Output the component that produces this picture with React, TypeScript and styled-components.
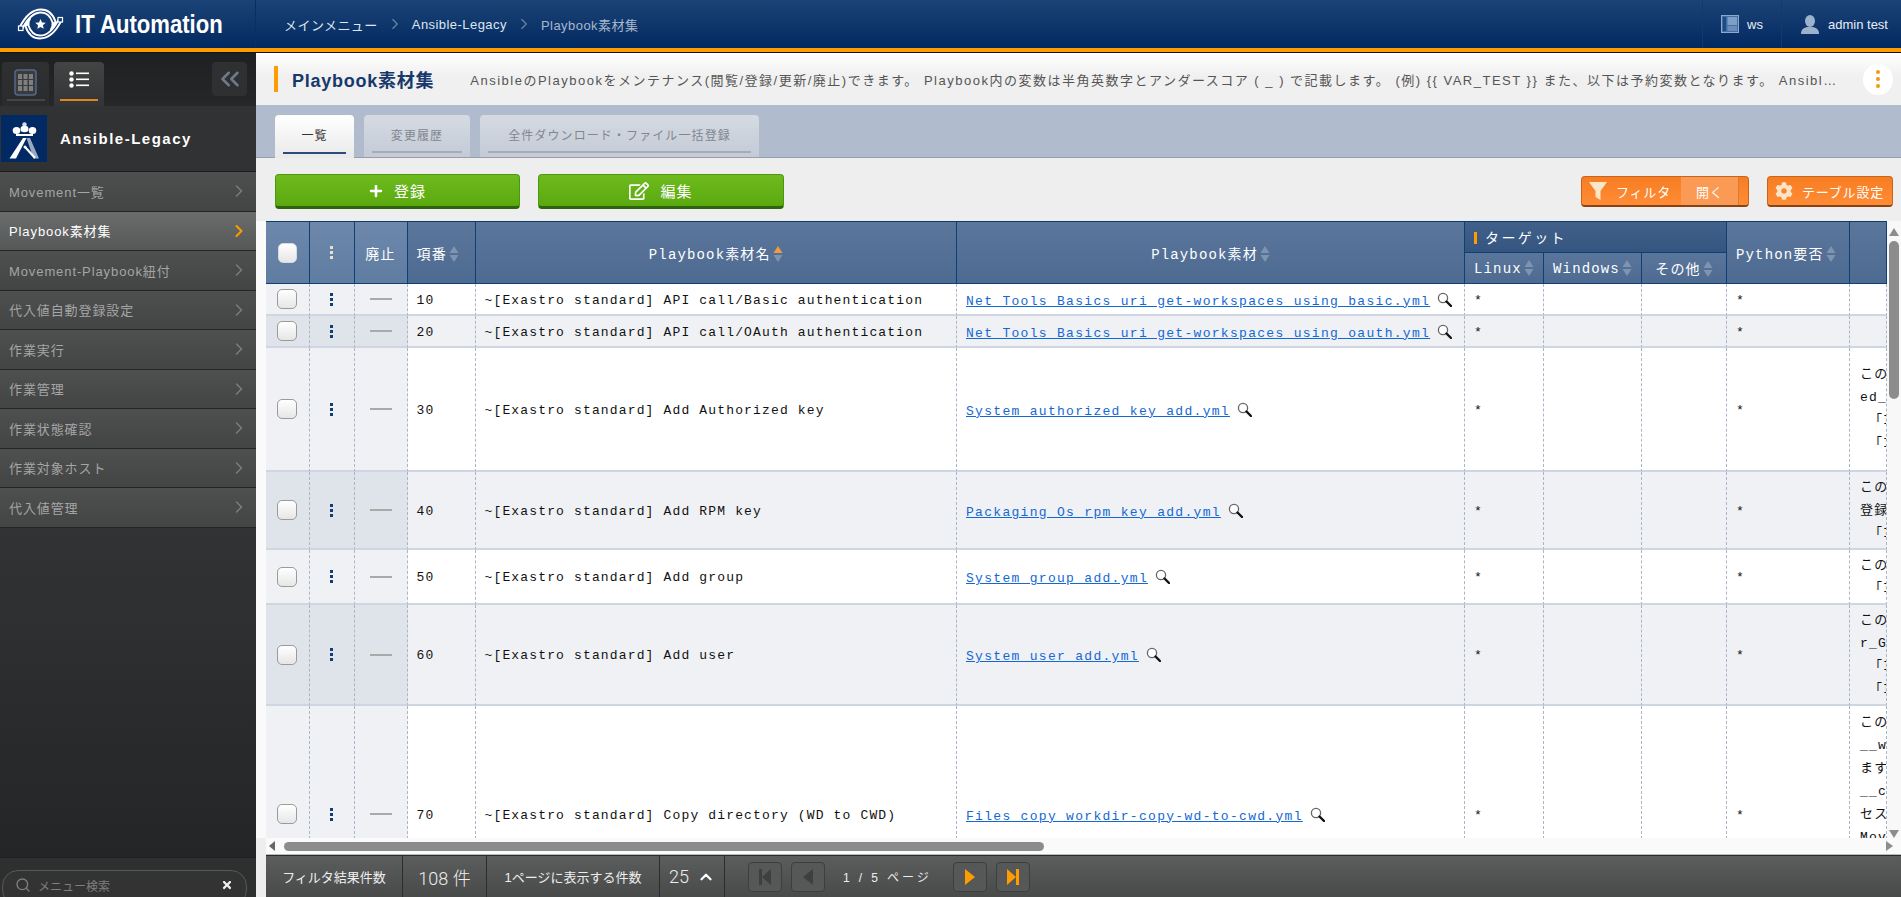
import React from 'react';
import styled, { createGlobalStyle } from 'styled-components';
import { FaCog, FaPlus, FaRegEdit, FaTimes } from 'react-icons/fa';
import { ChevronRight, ChevronUp, ChevronsLeft, Search } from 'lucide-react';

const GlobalStyle = createGlobalStyle`
  html, body { margin: 0; padding: 0; height: 100%; overflow: hidden; }
  body { font-family: "Liberation Sans", "Noto Sans CJK JP", sans-serif; font-size: 13px; background: #eee; }
  * { box-sizing: border-box; }
`;

const Page = styled.div`
  display: flex;
  flex-direction: column;
  width: 1901px;
  height: 897px;
  overflow: hidden;
`;

/* ---------- header ---------- */

const Header = styled.header`
  display: flex;
  align-items: stretch;
  height: 52px;
  flex: none;
  background: linear-gradient(#1b4376, #022a62);
  border-bottom: 4px solid #ff9d00;
  color: #fff;
`;

const Brand = styled.div`
  display: flex;
  align-items: center;
  width: 256px;
  padding-left: 17px;
  gap: 11px;
  border-right: 1px solid #0c2f60;
`;

const BrandName = styled.span`
  display: inline-block;
  font-weight: 700;
  font-size: 26px;
  white-space: nowrap;
  transform: scaleX(0.85);
  transform-origin: left center;
`;

const Crumbs = styled.nav`
  display: flex;
  align-items: center;
  flex: 1;
  padding-left: 28px;
  font-size: 13px;
  letter-spacing: 0.45px;
`;

const Crumb = styled.span<{ $current?: boolean }>`
  color: ${({ $current }) => ($current ? '#a9b7cb' : '#dfe6ef')};
  white-space: nowrap;
`;

const CrumbArrow = styled(ChevronRight)`
  color: #6f87a8;
  margin: 0 8px;
`;

const HeaderCell = styled.div<{ $width: number }>`
  display: flex;
  align-items: center;
  gap: 8px;
  width: ${({ $width }) => $width}px;
  padding-left: 18px;
  border-left: 1px solid #143a6b;
  font-size: 13px;
  color: #e8eef6;
  white-space: nowrap;
`;

/* ---------- body ---------- */

const Body = styled.div`
  display: flex;
  flex: 1;
  min-height: 0;
  border-top: 1px solid #111;
`;

const Sidebar = styled.aside`
  display: flex;
  flex-direction: column;
  width: 256px;
  flex: none;
  background: #2a2b2c;
`;

const SideTabs = styled.div`
  display: flex;
  height: 53px;
  padding: 9px 9px 0 2px;
  gap: 5px;
  background: linear-gradient(#1f2021, #262728);
`;

const SideTab = styled.div<{ $active?: boolean }>`
  display: flex;
  flex-direction: column;
  align-items: center;
  width: ${({ $active }) => ($active ? 50 : 47)}px;
  padding-top: ${({ $active }) => ($active ? 9 : 7)}px;
  border-radius: 4px 4px 0 0;
  background: ${({ $active }) => ($active ? 'linear-gradient(#434444, #333435)' : 'linear-gradient(#2f3031, #2a2b2c)')};
`;

const SideTabLine = styled.span<{ $active?: boolean }>`
  display: block;
  width: 38px;
  height: 2px;
  margin-top: auto;
  margin-bottom: 5px;
  background: ${({ $active }) => ($active ? '#e5841e' : '#454647')};
`;

const CollapseButton = styled.button`
  display: flex;
  align-items: center;
  justify-content: center;
  width: 35px;
  height: 34px;
  margin-left: auto;
  padding: 0;
  border: none;
  border-radius: 4px;
  background: #2f3031;
  color: #6e7a8c;
`;

const SectionHead = styled.div`
  display: flex;
  align-items: center;
  height: 66px;
  padding-left: 1px;
  gap: 13px;
  background: #313233;
  border-bottom: 1px solid #1c1d1d;
`;

const SectionName = styled.span`
  font-size: 15px;
  font-weight: 700;
  letter-spacing: 1.5px;
  color: #fff;
`;

const MenuList = styled.ul`
  list-style: none;
  margin: 0;
  padding: 0;
`;

const MenuItem = styled.li<{ $active?: boolean }>`
  display: flex;
  align-items: center;
  justify-content: space-between;
  height: 39.5px;
  padding: 0 7px 0 9px;
  font-size: 13px;
  letter-spacing: 0.9px;
  color: ${({ $active }) => ($active ? '#fff' : '#a5a5a5')};
  background: ${({ $active }) => ($active ? 'linear-gradient(#6b6c6c, #565757)' : 'linear-gradient(#4e4f4f, #434444)')};
  border-bottom: 1px solid #232424;
  svg { color: ${({ $active }) => ($active ? '#ff9d00' : '#7c7d7d')}; }
`;

const SideFill = styled.div`
  flex: 1;
  background: linear-gradient(#323334, #242526);
`;

const SearchArea = styled.div`
  height: 40px;
  padding: 12px 9px 0 2px;
  background: #2e2f2f;
  border-top: 1px solid #1f2020;
`;

const SearchBox = styled.div`
  display: flex;
  align-items: center;
  height: 36px;
  padding: 0 13px 6px 12px;
  gap: 7px;
  border: 1px solid #565757;
  border-radius: 16px;
  background: #333;
  color: #7d7e7e;
  font-size: 12px;
`;

const SearchText = styled.span`
  flex: 1;
`;

/* ---------- main ---------- */

const Main = styled.main`
  display: flex;
  flex-direction: column;
  flex: 1;
  min-width: 0;
`;

const TitleBar = styled.div`
  display: flex;
  align-items: center;
  height: 52px;
  flex: none;
  padding: 0 8px 0 18px;
  background: linear-gradient(#fff, #f0f0f0 45%);
`;

const TitleMark = styled.span`
  width: 4px;
  height: 26px;
  margin-right: 14px;
  background: #ff9d00;
`;

const Title = styled.h1`
  margin: 0 36px 0 0;
  font-size: 18px;
  font-weight: 700;
  letter-spacing: 0.75px;
  color: #17386b;
  white-space: nowrap;
`;

const Description = styled.p`
  flex: 1;
  min-width: 0;
  margin: 0;
  font-size: 13px;
  letter-spacing: 1.5px;
  color: #555;
  white-space: nowrap;
  overflow: hidden;
  text-overflow: ellipsis;
`;

const MoreButton = styled.div`
  display: flex;
  flex-direction: column;
  align-items: center;
  justify-content: center;
  width: 30px;
  height: 31px;
  margin-left: 20px;
  gap: 3px;
  border-radius: 50%;
  background: #fff;
`;

const MoreDot = styled.span`
  width: 4px;
  height: 4px;
  border-radius: 50%;
  background: #f29a0c;
`;

const TabBand = styled.div`
  display: flex;
  align-items: flex-end;
  height: 53px;
  flex: none;
  padding-left: 19px;
  gap: 10px;
  background: #b0bbcd;
  border-bottom: 1px solid #999fa8;
`;

const TabButton = styled.div<{ $active?: boolean; $width: number }>`
  display: flex;
  flex-direction: column;
  align-items: center;
  width: ${({ $width }) => $width}px;
  height: ${({ $active }) => ($active ? 43 : 42)}px;
  margin-bottom: ${({ $active }) => ($active ? -1 : 0)}px;
  padding: 11px 8px 0;
  border-radius: 4px 4px 0 0;
  font-size: 12px;
  letter-spacing: 1.1px;
  color: ${({ $active }) => ($active ? '#333' : '#81868f')};
  background: ${({ $active }) => ($active ? 'linear-gradient(#fff, #e9e9e9)' : 'linear-gradient(#d5dae2, #c4cbd7)')};
  white-space: nowrap;
`;

const TabLine = styled.span<{ $active?: boolean }>`
  display: block;
  align-self: stretch;
  height: 2px;
  margin-top: auto;
  margin-bottom: 4px;
  background: ${({ $active }) => ($active ? '#2c4a7c' : '#a5adbb')};
`;

const Toolbar = styled.div`
  display: flex;
  align-items: center;
  height: 63px;
  flex: none;
  padding: 4px 8px 0 19px;
  gap: 18px;
  background: #eee;
`;

const GreenButton = styled.button<{ $width: number }>`
  display: flex;
  align-items: center;
  justify-content: center;
  gap: 11px;
  width: ${({ $width }) => $width}px;
  height: 35px;
  padding: 0;
  border: 1px solid #4d9612;
  border-bottom: 3px solid #2f640c;
  border-radius: 4px;
  background: linear-gradient(#6fbb1e, #5aa90f);
  color: #fff;
  font-family: inherit;
  font-size: 15px;
  letter-spacing: 1px;
`;

const ToolSpacer = styled.div`
  flex: 1;
`;

const OrangeButton = styled.div<{ $width: number }>`
  display: flex;
  align-items: center;
  width: ${({ $width }) => $width}px;
  height: 31px;
  overflow: hidden;
  border: 1px solid #c8651d;
  border-bottom: 2px solid #8a4413;
  border-radius: 4px;
  background: linear-gradient(#f77d22, #ff8c36);
  color: #fff;
  font-size: 13px;
  letter-spacing: 0.8px;
  white-space: nowrap;
`;

const OrangeLabel = styled.span<{ $width?: number }>`
  display: flex;
  align-items: center;
  gap: 9px;
  width: ${({ $width }) => ($width ? `${$width}px` : 'auto')};
  padding-left: 7px;
`;

const OrangeOpen = styled.span`
  display: flex;
  align-items: center;
  align-self: stretch;
  width: 58px;
  padding-left: 15px;
  background: #fb9a55;
  border-right: 1px solid #d97a35;
`;

/* ---------- table ---------- */

const TableArea = styled.div`
  display: flex;
  flex: 1;
  min-height: 0;
  padding-left: 10px;
  background: #fafafa;
`;

const TableClip = styled.div`
  width: 1621px;
  overflow: hidden;
  border-top: 1px solid #0f3a6c;
`;

const Table = styled.table`
  width: 1621px;
  table-layout: fixed;
  border-collapse: separate;
  border-spacing: 0;
  font-family: "Liberation Mono", "Noto Sans CJK JP", monospace;
  font-size: 13px;
  letter-spacing: 1.15px;
  color: #111;
`;

const HeadCell = styled.th<{ $tone?: 'light' | 'dark'; $align?: string }>`
  height: 31px;
  padding: 0 0 0 ${({ $align }) => ($align === 'left' ? 9 : 0)}px;
  border-right: 1px solid #123f73;
  border-bottom: 1px solid #123f73;
  font-size: 14px;
  font-weight: 400;
  color: #fff;
  text-align: ${({ $align }) => $align || 'center'};
  white-space: nowrap;
  background: ${({ $tone }) =>
    $tone === 'light'
      ? 'linear-gradient(#6d88ab, #5f7ca1)'
      : $tone === 'dark'
        ? 'linear-gradient(#41618b, #34557f)'
        : 'linear-gradient(#5b769b, #4d6a91)'};
`;

const GroupMark = styled.span`
  display: inline-block;
  width: 3px;
  height: 12px;
  margin-right: 8px;
  vertical-align: -1px;
  background: #ff9d00;
`;

const GroupName = styled.span`
  letter-spacing: 2.4px;
`;

const BodyRow = styled.tr<{ $height: number; $alt?: boolean }>`
  height: ${({ $height }) => $height}px;
  background: ${({ $alt }) => ($alt ? '#eff1f5' : '#fff')};
`;

const Cell = styled.td<{ $fixed?: boolean; $alt?: boolean; $center?: boolean }>`
  padding: ${({ $center }) => ($center ? 0 : '2px 0 0 9px')};
  border-right: 1px dashed #a9b6c9;
  border-bottom: 2px solid #cfd6e1;
  text-align: ${({ $center }) => ($center ? 'center' : 'left')};
  white-space: nowrap;
  overflow: hidden;
  vertical-align: middle;
  background: ${({ $fixed, $alt }) => ($fixed ? ($alt ? '#dfe4eb' : '#eff1f5') : 'transparent')};
`;

const NoteCell = styled(Cell)`
  padding: 0 0 0 10px;
  line-height: 23px;
  white-space: pre;
`;

const Check = styled.span<{ $head?: boolean }>`
  display: inline-block;
  width: ${({ $head }) => ($head ? 19 : 20)}px;
  height: 20px;
  vertical-align: middle;
  border: 1px solid ${({ $head }) => ($head ? '#d5dbe3' : '#9a9a9a')};
  border-radius: 5px;
  background: linear-gradient(#fff, #e6e6e6);
`;

const MenuDots = styled.span<{ $color: string }>`
  display: inline-flex;
  flex-direction: column;
  gap: 2px;
  vertical-align: middle;
  i {
    display: block;
    width: 3px;
    height: 3px;
    background: ${({ $color }) => $color};
  }
`;

const Dash = styled.span`
  display: inline-block;
  width: 22px;
  height: 2px;
  vertical-align: middle;
  background: #a9a9a9;
`;

const FileLink = styled.a`
  color: #1468d2;
  letter-spacing: 1.3px;
  text-decoration: underline;
`;

const Glass = styled.svg`
  margin-left: 7px;
  vertical-align: -2px;
`;

const Sort = styled.svg`
  margin-left: 2px;
  vertical-align: -3px;
`;

const Vertical = styled.div`
  display: flex;
  flex-direction: column;
  align-items: center;
  width: 14px;
  padding: 7px 0 0;
  background: #f8f8f8;
`;

const VerticalThumb = styled.div`
  width: 10px;
  height: 158px;
  margin: 5px 0 auto;
  border-radius: 5px;
  background: #8c8c8c;
`;

const Horizontal = styled.div`
  display: flex;
  align-items: center;
  height: 17px;
  flex: none;
  margin-left: 10px;
  padding: 0 8px 0 3px;
  background: #fafafa;
  border-bottom: 1px solid #bbb;
`;

const HorizontalThumb = styled.div`
  width: 760px;
  height: 9px;
  margin: 0 auto 0 9px;
  border-radius: 5px;
  background: #8c8c8c;
`;

const Arrow = styled.svg`
  flex: none;
`;

/* ---------- footer ---------- */

const Footer = styled.footer`
  display: flex;
  align-items: stretch;
  height: 42px;
  flex: none;
  margin-left: 10px;
  background: linear-gradient(#5c5e5e, #484a4a);
  border-top: 1px solid #2a2b2b;
  color: #eee;
`;

const FooterCell = styled.div<{ $width: number; $big?: boolean }>`
  display: flex;
  align-items: center;
  justify-content: center;
  gap: 8px;
  width: ${({ $width }) => $width}px;
  border-right: 1px solid #2b2c2c;
  font-family: ${({ $big }) => ($big ? 'Roboto, "Noto Sans CJK JP", sans-serif' : 'inherit')};
  font-size: ${({ $big }) => ($big ? 18 : 13)}px;
  font-weight: ${({ $big }) => ($big ? 300 : 400)};
  white-space: nowrap;
`;

const Pager = styled.div`
  display: flex;
  align-items: center;
  padding-left: 23px;
  gap: 9px;
`;

const PageButton = styled.div<{ $active?: boolean }>`
  display: flex;
  align-items: center;
  justify-content: center;
  width: 34px;
  height: 30px;
  border: 1px solid #3d3e3e;
  border-radius: 4px;
  background: #565858;
  color: ${({ $active }) => ($active ? '#ff9d00' : '#3e3f3f')};
`;

const PageText = styled.span`
  width: 110px;
  padding-left: 9px;
  font-size: 12px;
  letter-spacing: 2.9px;
  white-space: pre;
`;

/* ---------- drawings ---------- */

const BrandLogo = () => (
  <svg width="47" height="32" viewBox="0 0 47 32">
    <g fill="none" strokeLinecap="butt">
      <path id="band" d="M4 20 C9 10 16 3 24 3 C31 3 35 8 37 14 C37.5 17 37 20 35 23" stroke="#fff" strokeWidth="5" />
      <path d="M43 12 C38 22 31 29 23 29 C16 29 12 24 10 18 C9.500 15 10 12 12 9" stroke="#fff" strokeWidth="5" />
      <path d="M4 20 C9 10 16 3 24 3 C31 3 35 8 37 14" stroke="#123a70" strokeWidth="1.1" />
      <path d="M43 12 C38 22 31 29 23 29 C16 29 12 24 10 18" stroke="#123a70" strokeWidth="1.1" />
    </g>
    <rect x="1.500" y="18" width="4.500" height="4.500" fill="#123a70" stroke="#fff" strokeWidth="1.2" />
    <rect x="41" y="9.500" width="4.500" height="4.500" fill="#123a70" stroke="#fff" strokeWidth="1.2" />
    <circle cx="23.500" cy="16" r="8" fill="#123a70" />
    <path d="M23.500 11l1.500 3.400 3.700.4-2.800 2.400.8 3.600-3.200-1.900-3.200 1.900.8-3.600-2.800-2.400 3.700-.4z" fill="#fff" />
  </svg>
);

const CrownLogo = () => (
  <svg width="46" height="47" viewBox="0 0 46 47">
    <rect width="46" height="47" fill="#012a64" />
    <circle cx="23.500" cy="9.500" r="2.200" fill="#d7dde8" />
    <ellipse cx="15.500" cy="15.500" rx="3.800" ry="3.500" fill="#fff" />
    <ellipse cx="23.500" cy="14" rx="4" ry="3.200" fill="#fff" />
    <ellipse cx="31.500" cy="15.500" rx="3.800" ry="3.500" fill="#fff" />
    <rect x="15" y="19" width="17" height="2" fill="#fff" />
    <path d="M22 23h3.500L15 43.500H8.500z" fill="#fff" />
    <path d="M25.500 23H29l9 20.500h-5.500z" fill="#9aa9c2" />
    <circle cx="24" cy="32" r="1.500" fill="#fff" />
    <path d="M24.500 32.500L34 43" stroke="#fff" strokeWidth="2.200" />
  </svg>
);

const PanelIcon = () => (
  <svg width="18" height="18" viewBox="0 0 18 18">
    <rect x="0.5" y="0.5" width="17" height="17" fill="#3f6ea8" stroke="#8fa9c9" />
    <rect x="2" y="2" width="3" height="14" fill="#1f4a80" />
    <rect x="6.5" y="2" width="9.5" height="8" fill="#7f9fc5" />
    <rect x="6.5" y="11" width="9.5" height="5" fill="#6a8db7" />
  </svg>
);

const UserIcon = () => (
  <svg width="20" height="19" viewBox="0 0 20 19">
    <ellipse cx="10" cy="6" rx="5" ry="6" fill="#9db2cd" />
    <path d="M1 19c0-5 3-6 6-7h6c3 1 6 2 6 7z" fill="#9db2cd" />
  </svg>
);

const GridIcon = () => (
  <svg width="23" height="27" viewBox="0 0 23 27">
    <rect x="1" y="1" width="21" height="25" rx="3" fill="#3a3b3c" stroke="#55698a" strokeWidth="1.5" />
    {[4, 10, 16].flatMap((y) => [4, 9.5, 15].map((x) => <rect key={`${x}-${y}`} x={x} y={y + 1} width="4" height="5" fill="#7d7e7f" />))}
  </svg>
);

const ListIcon = () => (
  <svg width="20" height="17" viewBox="0 0 20 17">
    <g fill="#fff">
      <circle cx="2.5" cy="2.5" r="2.2" />
      <circle cx="2.5" cy="8.5" r="2.2" />
      <circle cx="2.5" cy="14.5" r="2.2" />
      <rect x="7" y="1.5" width="13" height="1.6" />
      <rect x="7" y="7.5" width="13" height="1.6" />
      <rect x="7" y="13.5" width="13" height="1.6" />
    </g>
  </svg>
);

const FunnelIcon = () => (
  <svg width="18" height="20" viewBox="0 0 18 20">
    <path d="M0 1h18l-6.5 9v9l-5-3v-6z" fill="#fde6c8" />
  </svg>
);

const SortIcon = ({ up }: { up?: boolean }) => (
  <Sort width="10" height="16" viewBox="0 0 10 16">
    <path d="M5 0l4.5 7h-9z" fill={up ? '#f39a3c' : '#7f94b0'} />
    <path d="M5 16L.5 9h9z" fill="#7f94b0" />
  </Sort>
);

const GlassIcon = () => (
  <Glass width="15" height="15" viewBox="0 0 15 15">
    <circle cx="6" cy="6" r="4.6" fill="#fff" stroke="#666" strokeWidth="1.3" />
    <path d="M9.5 9.5L14 14" stroke="#111" strokeWidth="2.4" strokeLinecap="round" />
  </Glass>
);

const PageIcon = ({ dir, stop }: { dir: 'left' | 'right'; stop?: boolean }) => (
  <svg width="14" height="16" viewBox="0 0 14 16">
    <g fill="currentColor" transform={dir === 'left' ? 'translate(14,0) scale(-1,1)' : undefined}>
      <path d={stop ? 'M1 0l9 8-9 8z' : 'M2 0l10 8-10 8z'} />
      {stop && <rect x="10" y="0" width="3" height="16" />}
    </g>
  </svg>
);

/* ---------- data ---------- */

const menus = [
  'Movement一覧',
  'Playbook素材集',
  'Movement-Playbook紐付',
  '代入値自動登録設定',
  '作業実行',
  '作業管理',
  '作業状態確認',
  '作業対象ホスト',
  '代入値管理',
];

type Row = { no: number; name: string; file: string; height: number; notes: string[] };

const rows: Row[] = [
  { no: 10, name: 'API call/Basic authentication', file: 'Net_Tools_Basics_uri_get-workspaces_using_basic.yml', height: 32, notes: [] },
  { no: 20, name: 'API call/OAuth authentication', file: 'Net_Tools_Basics_uri_get-workspaces_using_oauth.yml', height: 32, notes: [] },
  { no: 30, name: 'Add Authorized key', file: 'System_authorized_key_add.yml', height: 124, notes: ['このPlaybook', 'ed_key', ' 「Item', ' 「Item'] },
  { no: 40, name: 'Add RPM key', file: 'Packaging_Os_rpm_key_add.yml', height: 78, notes: ['このPlaybook', '登録します', ' 「Item'] },
  { no: 50, name: 'Add group', file: 'System_group_add.yml', height: 55, notes: ['このPlaybook', ' 「Item'] },
  { no: 60, name: 'Add user', file: 'System_user_add.yml', height: 101, notes: ['このPlaybook', 'r_Group', ' 「Item', ' 「Item'] },
  {
    no: 70,
    name: 'Copy directory (WD to CWD)',
    file: 'Files_copy_workdir-copy-wd-to-cwd.yml',
    height: 218,
    notes: ['このPlaybook', '__workdir__', 'ます', '__cwd__', 'セス', 'Movement', ' ', ' ', ' '],
  },
];

const widths = [43.5, 45, 53, 68, 481.5, 508, 79, 98, 85, 123, 37];

export default function App() {
  return (
    <Page>
      <GlobalStyle />
      <Header>
        <Brand>
          <BrandLogo />
          <BrandName>IT Automation</BrandName>
        </Brand>
        <Crumbs>
          <Crumb>メインメニュー</Crumb>
          <CrumbArrow size={18} strokeWidth={1.5} />
          <Crumb>Ansible-Legacy</Crumb>
          <CrumbArrow size={18} strokeWidth={1.5} />
          <Crumb $current>Playbook素材集</Crumb>
        </Crumbs>
        <HeaderCell $width={79}>
          <PanelIcon />
          ws
        </HeaderCell>
        <HeaderCell $width={120}>
          <UserIcon />
          admin test
        </HeaderCell>
      </Header>
      <Body>
        <Sidebar>
          <SideTabs>
            <SideTab>
              <GridIcon />
              <SideTabLine />
            </SideTab>
            <SideTab $active>
              <ListIcon />
              <SideTabLine $active />
            </SideTab>
            <CollapseButton>
              <ChevronsLeft size={30} strokeWidth={2} />
            </CollapseButton>
          </SideTabs>
          <SectionHead>
            <CrownLogo />
            <SectionName>Ansible-Legacy</SectionName>
          </SectionHead>
          <MenuList>
            {menus.map((menu, index) => (
              <MenuItem key={menu} $active={index === 1}>
                {menu}
                <ChevronRight size={20} strokeWidth={index === 1 ? 2.4 : 1.8} />
              </MenuItem>
            ))}
          </MenuList>
          <SideFill />
          <SearchArea>
            <SearchBox>
              <Search size={16} strokeWidth={2} />
              <SearchText>メニュー検索</SearchText>
              <FaTimes size={12} color="#eee" />
            </SearchBox>
          </SearchArea>
        </Sidebar>
        <Main>
          <TitleBar>
            <TitleMark />
            <Title>Playbook素材集</Title>
            <Description>
              AnsibleのPlaybookをメンテナンス(閲覧/登録/更新/廃止)できます。 Playbook内の変数は半角英数字とアンダースコア ( _ ) で記載します。 (例) {'{{'} VAR_TEST {'}}'} また、以下は予約変数となります。 Ansibleの実行時に値が設定されます。
            </Description>
            <MoreButton>
              <MoreDot />
              <MoreDot />
              <MoreDot />
            </MoreButton>
          </TitleBar>
          <TabBand>
            <TabButton $active $width={79}>
              一覧
              <TabLine $active />
            </TabButton>
            <TabButton $width={106}>
              変更履歴
              <TabLine />
            </TabButton>
            <TabButton $width={279}>
              全件ダウンロード・ファイル一括登録
              <TabLine />
            </TabButton>
          </TabBand>
          <Toolbar>
            <GreenButton $width={245}>
              <FaPlus size={14} />
              登録
            </GreenButton>
            <GreenButton $width={246}>
              <FaRegEdit size={20} />
              編集
            </GreenButton>
            <ToolSpacer />
            <OrangeButton $width={168}>
              <OrangeLabel $width={99}>
                <FunnelIcon />
                フィルタ
              </OrangeLabel>
              <OrangeOpen>開く</OrangeOpen>
            </OrangeButton>
            <OrangeButton $width={126}>
              <OrangeLabel>
                <FaCog size={18} color="#fde6c8" />
                テーブル設定
              </OrangeLabel>
            </OrangeButton>
          </Toolbar>
          <TableArea>
            <TableClip>
              <Table>
                <colgroup>
                  {widths.map((width, index) => (
                    <col key={index} width={width} />
                  ))}
                </colgroup>
                <thead>
                  <tr>
                    <HeadCell $tone="light" rowSpan={2}>
                      <Check $head />
                    </HeadCell>
                    <HeadCell $tone="light" rowSpan={2}>
                      <MenuDots $color="#e9e2c8">
                        <i />
                        <i />
                        <i />
                      </MenuDots>
                    </HeadCell>
                    <HeadCell $tone="light" rowSpan={2}>
                      廃止
                    </HeadCell>
                    <HeadCell rowSpan={2} $align="left">
                      項番
                      <SortIcon />
                    </HeadCell>
                    <HeadCell rowSpan={2}>
                      Playbook素材名
                      <SortIcon up />
                    </HeadCell>
                    <HeadCell rowSpan={2}>
                      Playbook素材
                      <SortIcon />
                    </HeadCell>
                    <HeadCell colSpan={3} $tone="dark" $align="left">
                      <GroupMark />
                      <GroupName>ターゲット</GroupName>
                    </HeadCell>
                    <HeadCell rowSpan={2} $align="left">
                      Python要否
                      <SortIcon />
                    </HeadCell>
                    <HeadCell rowSpan={2} />
                  </tr>
                  <tr>
                    <HeadCell $align="left">
                      Linux
                      <SortIcon />
                    </HeadCell>
                    <HeadCell>
                      Windows
                      <SortIcon />
                    </HeadCell>
                    <HeadCell>
                      その他
                      <SortIcon />
                    </HeadCell>
                  </tr>
                </thead>
                <tbody>
                  {rows.map((row, index) => {
                    const alt = index % 2 === 1;
                    return (
                      <BodyRow key={row.no} $height={row.height} $alt={alt}>
                        <Cell $fixed $alt={alt} $center>
                          <Check />
                        </Cell>
                        <Cell $fixed $alt={alt} $center>
                          <MenuDots $color="#123f73">
                            <i />
                            <i />
                            <i />
                          </MenuDots>
                        </Cell>
                        <Cell $fixed $alt={alt} $center>
                          <Dash />
                        </Cell>
                        <Cell>{row.no}</Cell>
                        <Cell>~[Exastro standard] {row.name}</Cell>
                        <Cell>
                          <FileLink>{row.file}</FileLink>
                          <GlassIcon />
                        </Cell>
                        <Cell>*</Cell>
                        <Cell />
                        <Cell />
                        <Cell>*</Cell>
                        <NoteCell>{row.notes.join('\n')}</NoteCell>
                      </BodyRow>
                    );
                  })}
                </tbody>
              </Table>
            </TableClip>
            <Vertical>
              <Arrow width="10" height="8" viewBox="0 0 10 8">
                <path d="M5 0l5 8H0z" fill="#8c8c8c" />
              </Arrow>
              <VerticalThumb />
              <Arrow width="10" height="8" viewBox="0 0 10 8">
                <path d="M5 8l5-8H0z" fill="#8c8c8c" />
              </Arrow>
            </Vertical>
          </TableArea>
          <Horizontal>
            <Arrow width="6" height="10" viewBox="0 0 6 10">
              <path d="M0 5l6-5v10z" fill="#666" />
            </Arrow>
            <HorizontalThumb />
            <Arrow width="7" height="10" viewBox="0 0 7 10">
              <path d="M7 5L0 0v10z" fill="#8c8c8c" />
            </Arrow>
          </Horizontal>
          <Footer>
            <FooterCell $width={137}>フィルタ結果件数</FooterCell>
            <FooterCell $width={84} $big>
              108 件
            </FooterCell>
            <FooterCell $width={173}>1ページに表示する件数</FooterCell>
            <FooterCell $width={65} $big>
              25
              <ChevronUp size={18} strokeWidth={3} color="#fff" />
            </FooterCell>
            <Pager>
              <PageButton>
                <PageIcon dir="left" stop />
              </PageButton>
              <PageButton>
                <PageIcon dir="left" />
              </PageButton>
              <PageText>1 / 5 ページ</PageText>
              <PageButton $active>
                <PageIcon dir="right" />
              </PageButton>
              <PageButton $active>
                <PageIcon dir="right" stop />
              </PageButton>
            </Pager>
          </Footer>
        </Main>
      </Body>
    </Page>
  );
}
